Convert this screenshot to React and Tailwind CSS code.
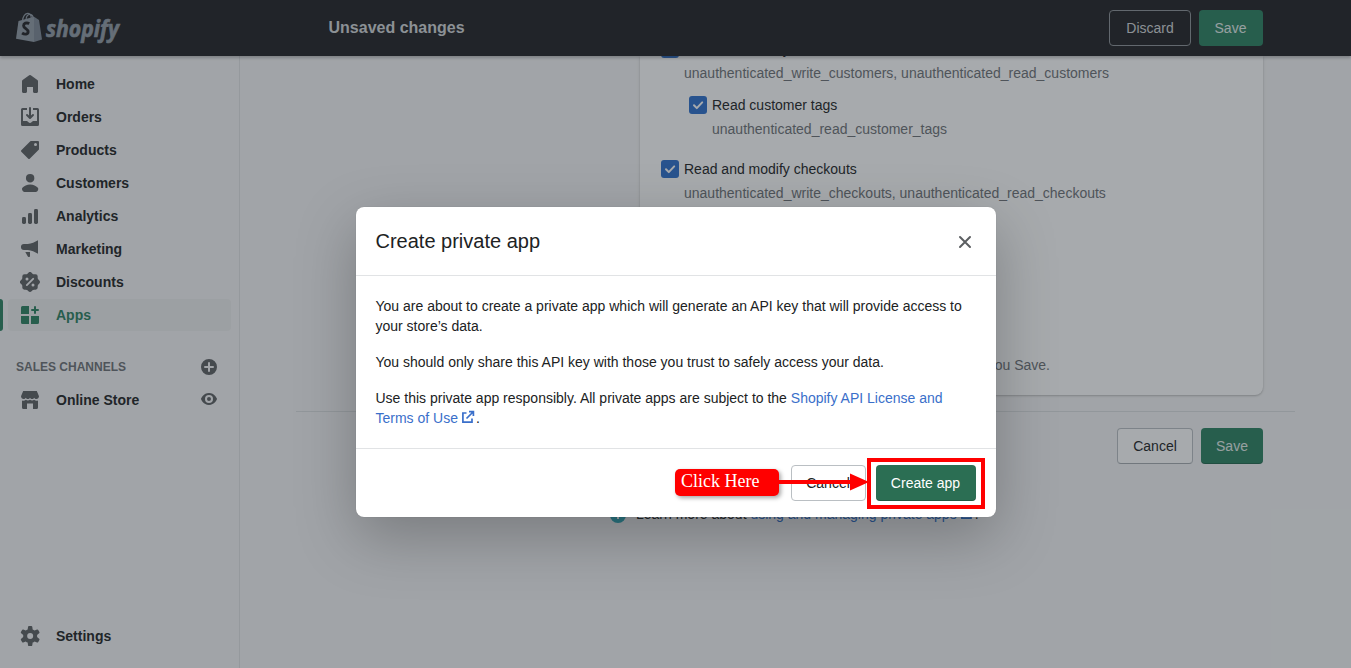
import React from "react";

const HomeIcon = () => (
  <path d="M18 7.261V17.5c0 .841-.672 1.5-1.5 1.5h-2c-.828 0-1.5-.659-1.5-1.5V13H7v4.477C7 18.318 6.328 19 5.5 19h-2c-.828 0-1.5-.682-1.5-1.523V7.261a1.5 1.5 0 01.615-1.21l6.59-4.82a1.481 1.481 0 011.59 0l6.59 4.82A1.5 1.5 0 0118 7.26z" />
);
const OrdersIcon = () => (
  <>
    <path d="M11 1a1 1 0 10-2 0v7.586L7.707 7.293a1 1 0 00-1.414 1.414l3 3a1 1 0 001.414 0l3-3a1 1 0 00-1.414-1.414L11 8.586V1z" />
    <path d="M3 14V3h4V1H2.5A1.5 1.5 0 001 2.5v15A1.5 1.5 0 002.5 19h15a1.5 1.5 0 001.5-1.5v-15A1.5 1.5 0 0017.5 1H13v2h4v11h-3.500c-.775 0-1.388.662-1.926 1.244l-.11.12A1.994 1.994 0 0110 16a1.994 1.994 0 01-1.463-.637l-.111-.12C7.888 14.664 7.275 14 6.500 14H3z" />
  </>
);
const ProductsIcon = () => (
  <path fillRule="evenodd" d="M10.293 1.293A1 1 0 0111 1h7a1 1 0 011 1v7a1 1 0 01-.293.707l-9 9a1 1 0 01-1.414 0l-7-7a1 1 0 010-1.414l9-9zM15.500 6a1.500 1.500 0 100-3 1.500 1.500 0 000 3z" />
);
const CustomersIcon = () => (
  <path d="M14.363 5.220a4.220 4.220 0 11-8.439 0 4.220 4.220 0 018.439 0zM2.670 14.469c1.385-1.090 4.141-2.853 7.474-2.853 3.332 0 6.089 1.764 7.474 2.853.618.486.810 1.308.567 2.056l-.333 1.020A2.110 2.110 0 0115.846 19H4.441a2.110 2.110 0 01-2.005-1.455l-.333-1.020c-.245-.748-.052-1.570.567-2.056z" />
);
const AnalyticsIcon = () => (
  <>
    <rect x="2" y="11" width="4" height="7" rx="1.400" />
    <rect x="8" y="7" width="4" height="11" rx="1.400" />
    <rect x="14" y="3" width="4" height="15" rx="1.400" />
  </>
);
const MarketingIcon = () => (
  <path d="M18 1.200v13.600c-3.100-1.900-6.600-3.300-10.200-3.700H4A3.050 3.050 0 014 5h3.800C11.400 4.500 14.900 3.200 18 1.200zM5.300 13h4.700v4.200c0 .5-.5.800-.9.800H8.600c-.4 0-.8-.3-.9-.7L5.300 13z" />
);
const DiscountsIcon = () => (
  <path fillRule="evenodd" d="M11.566.660a2.189 2.189 0 00-3.132 0l-.962.985a2.189 2.189 0 01-1.592.660l-1.377-.017a2.189 2.189 0 00-2.215 2.215l.016 1.377a2.189 2.189 0 01-.660 1.592l-.984.962a2.189 2.189 0 000 3.132l.985.962c.428.418.667.994.660 1.592l-.017 1.377a2.189 2.189 0 002.215 2.215l1.377-.016a2.189 2.189 0 011.592.660l.962.984c.859.880 2.273.880 3.132 0l.962-.985a2.189 2.189 0 011.592-.660l1.377.017a2.189 2.189 0 002.215-2.215l-.016-1.377a2.189 2.189 0 01.660-1.592l.984-.962c.880-.859.880-2.273 0-3.132l-.985-.962a2.189 2.189 0 01-.660-1.592l.017-1.377a2.189 2.189 0 00-2.215-2.215l-1.377.016a2.189 2.189 0 01-1.592-.660L11.566.660zM7 8.500a1.500 1.500 0 100-3 1.500 1.500 0 000 3zm6.778-1.056a.900.900 0 10-1.272-1.272l-6.284 6.284a.900.900 0 101.272 1.272l6.284-6.284zM14.500 13a1.500 1.500 0 11-3 0 1.500 1.500 0 013 0z" />
);
const AppsIcon = () => (
  <path d="M2.500 1A1.500 1.500 0 001 2.500V9h8V1H2.500zm-1.500 10h8v8H2.500A1.500 1.500 0 011 17.500V11zm10 0h8v6.500a1.500 1.500 0 01-1.500 1.500H11v-8zM16 2a1 1 0 10-2 0v2h-2a1 1 0 100 2h2v2a1 1 0 102 0V6h2a1 1 0 100-2h-2V2z" />
);
const StoreIcon = () => (
  <path d="M3.200 1h13.600L19 6.200c0 1.600-1.200 2.800-2.600 2.800-1 0-1.800-.5-2.200-1.300C13.800 8.500 13 9 12.100 9 11.200 9 10.400 8.500 10 7.700 9.600 8.500 8.800 9 7.900 9 7 9 6.200 8.500 5.800 7.700 5.400 8.500 4.600 9 3.600 9 2.200 9 1 7.800 1 6.200L3.200 1zM2 10.500c1.500.4 2.800.1 3.900-.7 1.200.9 2.800.9 4.100 0 1.300.9 2.900.9 4.100 0 1.100.8 2.400 1.100 3.900.7v7a1.500 1.500 0 01-1.500 1.500H13v-5.500H7V19H3.500A1.500 1.500 0 012 17.500v-7z" />
);
const PlusIcon = () => (
  <path fillRule="evenodd" d="M10 18a8 8 0 100-16 8 8 0 000 16zm1-12a1 1 0 10-2 0v3H6a1 1 0 100 2h3v3a1 1 0 102 0v-3h3a1 1 0 100-2h-3V6z" />
);
const EyeIcon = () => (
  <path fillRule="evenodd" d="M17.928 9.628C17.837 9.399 15.611 4 10 4S2.162 9.399 2.070 9.628a1.017 1.017 0 000 .744C2.163 10.601 4.389 16 10 16c5.611 0 7.837-5.399 7.928-5.628a1.017 1.017 0 000-.744zM10 14a4 4 0 110-8 4 4 0 010 8zm0-6a2 2 0 100 4 2 2 0 000-4z" />
);
const SettingsIcon = () => (
  <path fillRule="evenodd" d="M9.027 0a1 1 0 00-.990.859l-.370 2.598A6.993 6.993 0 005.742 4.570l-2.437-.980a1 1 0 00-1.239.428L.934 5.981a1 1 0 00.248 1.287l2.066 1.621a7.060 7.060 0 000 2.222l-2.066 1.621a1 1 0 00-.248 1.287l1.132 1.962a1 1 0 001.239.428l2.438-.979a6.995 6.995 0 001.923 1.113l.372 2.598a1 1 0 00.990.859h2.265a1 1 0 00.990-.859l.371-2.598a6.995 6.995 0 001.924-1.112l2.438.978a1 1 0 001.238-.428l1.133-1.962a1 1 0 00-.249-1.287l-2.065-1.621a7.063 7.063 0 000-2.222l2.065-1.621a1 1 0 00.249-1.287l-1.133-1.962a1 1 0 00-1.239-.428l-2.437.979a6.994 6.994 0 00-1.924-1.113L12.283.860a1 1 0 00-.990-.859H9.027zm1.133 13a3 3 0 100-6 3 3 0 000 6z" />
);

const Icon = ({ children, className = "" }) => (
  <svg viewBox="0 0 20 20" className={`size-5 shrink-0 ${className}`} fill="currentColor" aria-hidden="true">
    {children}
  </svg>
);

const ExternalIcon = ({ className = "" }) => (
  <svg viewBox="0 0 14 14" className={`-ml-px inline-block size-3.5 ${className}`} fill="none" stroke="currentColor" strokeWidth="1.700" aria-hidden="true">
    <path d="M5.500 3H1.900v9.100H11V8.500M5.500 8.500L12 2M8 1.600h4.400V6" />
  </svg>
);

const nav = [
  ["Home", HomeIcon],
  ["Orders", OrdersIcon],
  ["Products", ProductsIcon],
  ["Customers", CustomersIcon],
  ["Analytics", AnalyticsIcon],
  ["Marketing", MarketingIcon],
  ["Discounts", DiscountsIcon],
];

function NavItem({ label, icon: Glyph }) {
  return (
    <a className="flex h-[33px] items-center gap-4 pl-5 text-[#5c5f62]">
      <Icon className="mb-px"><Glyph /></Icon>
      <span className="font-bold leading-[21px] text-[#202223]">{label}</span>
    </a>
  );
}

function Logo() {
  return (
    <div className="flex items-start pl-4 pt-3 text-[#929ba6]">
      <svg viewBox="0 0 26 32" className="h-8 w-[26px]" aria-hidden="true">
        <path fill="currentColor" d="M2.500 9L18 4.800V30L0 26.700 2.500 9z" />
        <path fill="#7d8894" d="M18 4.800L23 8l3 19.500-8 2.500z" />
        <path fill="none" stroke="currentColor" strokeWidth="1.200" d="M6.500 9.500C6.500 4 9.500 1.200 12 1.300c2.400.2 3.300 2.700 3.300 5.200M10 8c0-3.500 2-6 4.300-5.600C16 2.700 17 4 17.300 6" />
        <path fill="none" stroke="#202123" strokeWidth="2.900" d="M13.300 11.500c-3-1.300-5.700-.2-5.700 2.200 0 2.800 4.500 3 4.500 6 0 2.700-3.400 3.200-6 1.300" />
      </svg>
      <svg viewBox="0 0 80 38" className="ml-[3px] h-[38px] w-20" aria-label="shopify">
        <text x="1" y="25.300" textLength="73" lengthAdjust="spacingAndGlyphs" fill="currentColor" stroke="currentColor" strokeWidth=".700" fontFamily="Open Sans" fontStyle="italic" fontWeight="700" fontSize="23.500">shopify</text>
      </svg>
    </div>
  );
}

function Check({ className = "" }) {
  return (
    <span className={`flex size-[18px] shrink-0 items-center justify-center rounded-[3px] bg-[#2c6ecb] text-white ${className}`}>
      <svg viewBox="0 0 18 18" className="size-[18px]" fill="none" stroke="currentColor" strokeWidth="2" strokeLinecap="round" strokeLinejoin="round">
        <path d="M5 9.300l2.800 2.800L13.200 6.400" />
      </svg>
    </span>
  );
}

function Permission({ label, scope, className = "" }) {
  return (
    <div className={`flex gap-[5px] ${className}`}>
      <Check className="mt-[3px]" />
      <div className="leading-6">
        <div className="whitespace-nowrap">{label}</div>
        <div className="whitespace-nowrap text-[#6d7175]">{scope}</div>
      </div>
    </div>
  );
}

function TopBar() {
  return (
    <header className="z-10 flex h-14 shrink-0 bg-[#202123] shadow-[0_2px_3px_rgba(0,0,0,0.25)]">
      <div className="w-[328px]"><Logo /></div>
      <div className="flex h-14 w-[935px] items-center justify-between">
        <h1 className="pl-[0.5px] text-base font-bold text-[#d2d5d8]">Unsaved changes</h1>
        <div className="flex gap-2">
          <button className="h-9 w-[82px] rounded border border-[#8c9196] text-[#d2d5d8]">Discard</button>
          <button className="h-9 w-16 rounded bg-[#2a8060] pr-px text-[#e3eeea]">Save</button>
        </div>
      </div>
    </header>
  );
}

function Sidebar() {
  return (
    <nav className="flex w-60 shrink-0 flex-col border-r border-[#e1e3e5] pt-3">
      {nav.map(([label, icon]) => <NavItem key={label} label={label} icon={icon} />)}
      <a className="flex h-8 items-stretch gap-[5px] pr-2 text-[#2a8060]">
        <span className="w-[3px] rounded-r bg-[#2a8060]" />
        <span className="flex grow items-center gap-4 rounded bg-[#edeeef] pl-3">
          <Icon><AppsIcon /></Icon>
          <span className="font-bold leading-5">Apps</span>
        </span>
      </a>
      <div className="mt-[26px] flex h-5 items-center justify-between pl-4 pr-5">
        <span className="text-[12px] font-bold text-[#6d7175]">SALES CHANNELS</span>
        <Icon className="text-[#5c5f62]"><PlusIcon /></Icon>
      </div>
      <div className="mt-[7px] flex items-center justify-between pr-5">
        <NavItem label="Online Store" icon={StoreIcon} />
        <Icon className="mb-[3px] text-[#5c5f62]"><EyeIcon /></Icon>
      </div>
      <div className="mb-[15px] mt-auto"><NavItem label="Settings" icon={SettingsIcon} /></div>
    </nav>
  );
}

function Content() {
  return (
    <main className="flex grow flex-col overflow-hidden">
      <section className="ml-[400px] flex h-[339px] w-[623px] shrink-0 flex-col rounded-b-lg bg-white pl-[21px] shadow-[0_0_5px_rgba(23,24,24,0.08),0_1px_2px_rgba(0,0,0,0.2)]">
        <Permission className="-mt-[19px]" label="Read and modify customer details" scope="unauthenticated_write_customers, unauthenticated_read_customers" />
        <Permission className="ml-7 mt-2" label="Read customer tags" scope="unauthenticated_read_customer_tags" />
        <Permission className="mt-4" label="Read and modify checkouts" scope="unauthenticated_write_checkouts, unauthenticated_read_checkouts" />
        <p className="mb-5 mr-[213px] mt-auto self-end leading-5 text-[#6d7175]">The access token will be generated when you Save.</p>
      </section>
      <div className="ml-14 mr-14 mt-4 flex shrink-0 justify-end gap-2 border-t border-[#dcdfe1] pr-8 pt-4">
        <button className="h-9 w-[76px] rounded border border-[#babfc3] border-b-[#a6abb0] bg-white">Cancel</button>
        <button className="h-9 w-[62px] rounded bg-[#2a8060] text-[#e3eeea] shadow-[inset_0_-1px_0_rgba(0,0,0,0.2)]">Save</button>
      </div>
      <div className="ml-[370px] mt-10 flex items-center gap-2.5">
        <svg viewBox="0 0 16 16" className="size-4"><circle cx="8" cy="8" r="8" fill="#31a8b8" /><path d="M8 7v5M8 4v1.500" stroke="white" strokeWidth="2" /></svg>
        <p>Learn more about <a className="text-[#2c6ecb]">using and managing private apps <ExternalIcon className="align-[-1px]" /></a>&#8202;.</p>
      </div>
    </main>
  );
}

function Modal() {
  return (
    <div className="absolute left-[355.5px] top-[207px] flex h-[310px] w-[640px] flex-col rounded-lg bg-white shadow-[0_20px_60px_rgba(0,0,0,0.25),0_0_1px_rgba(0,0,0,0.2)]">
      <div className="flex h-[69px] items-center justify-between border-b border-[#e1e3e5] px-5">
        <h2 className="text-[20px] leading-7">Create private app</h2>
        <svg viewBox="0 0 20 20" className="mr-px mt-0.5 size-5 text-[#5c5f62]" fill="none" stroke="currentColor" strokeWidth="2" strokeLinecap="round">
          <path d="M5 5l10 10M15 5L5 15" />
        </svg>
      </div>
      <div className="flex h-[173px] flex-col gap-4 border-b border-[#e1e3e5] px-5 pt-5 leading-5">
        <p>You are about to create a private app which will generate an API key that will provide access to your store’s data.</p>
        <p>You should only share this API key with those you trust to safely access your data.</p>
        <p>Use this private app responsibly. All private apps are subject to the <a className="text-[#3a6fca]">Shopify API License and<br />Terms of Use <ExternalIcon className="align-[-1px]" /></a>&#8202;.</p>
      </div>
      <div className="flex justify-end gap-2.5 pr-5 pt-4">
        <button className="h-9 w-[75px] rounded border border-[#babfc3] bg-white">Cancel</button>
        <button className="h-9 w-[100px] rounded bg-[#2b6e53] text-white shadow-[inset_0_-1px_0_rgba(0,0,0,0.2)]">Create app</button>
      </div>
      <div className="absolute left-[511.5px] top-[251px] h-[51px] w-[118px] border-4 border-[#ff0000]" />
      <div className="absolute left-[319.5px] top-[262px] flex h-[27px] items-center">
        <span className="flex h-[27px] w-[104px] items-center rounded-[5px] bg-[#ff0000] pb-[3px] pl-1.5 font-['Liberation_Serif',serif] text-[18px] text-white shadow-[2px_2px_4px_rgba(0,0,0,0.35)]">Click Here</span>
        <svg viewBox="0 0 90 18" className="-mt-px h-[18px] w-[90px]" fill="#ff0000"><path d="M0 7h71V0.500l19 8.500-19 8.500V11H0z" /></svg>
      </div>
    </div>
  );
}

export default function App() {
  return (
    <div className="relative flex h-[668px] w-[1351px] flex-col overflow-hidden bg-[#f6f6f7] font-['Liberation_Sans',Arial,sans-serif] text-[14px] text-[#202223]">
      <TopBar />
      <div className="flex min-h-0 grow">
        <Sidebar />
        <Content />
      </div>
      <div className="absolute inset-0 z-20 bg-[rgba(34,43,50,0.4)]">
        <Modal />
      </div>
    </div>
  );
}
